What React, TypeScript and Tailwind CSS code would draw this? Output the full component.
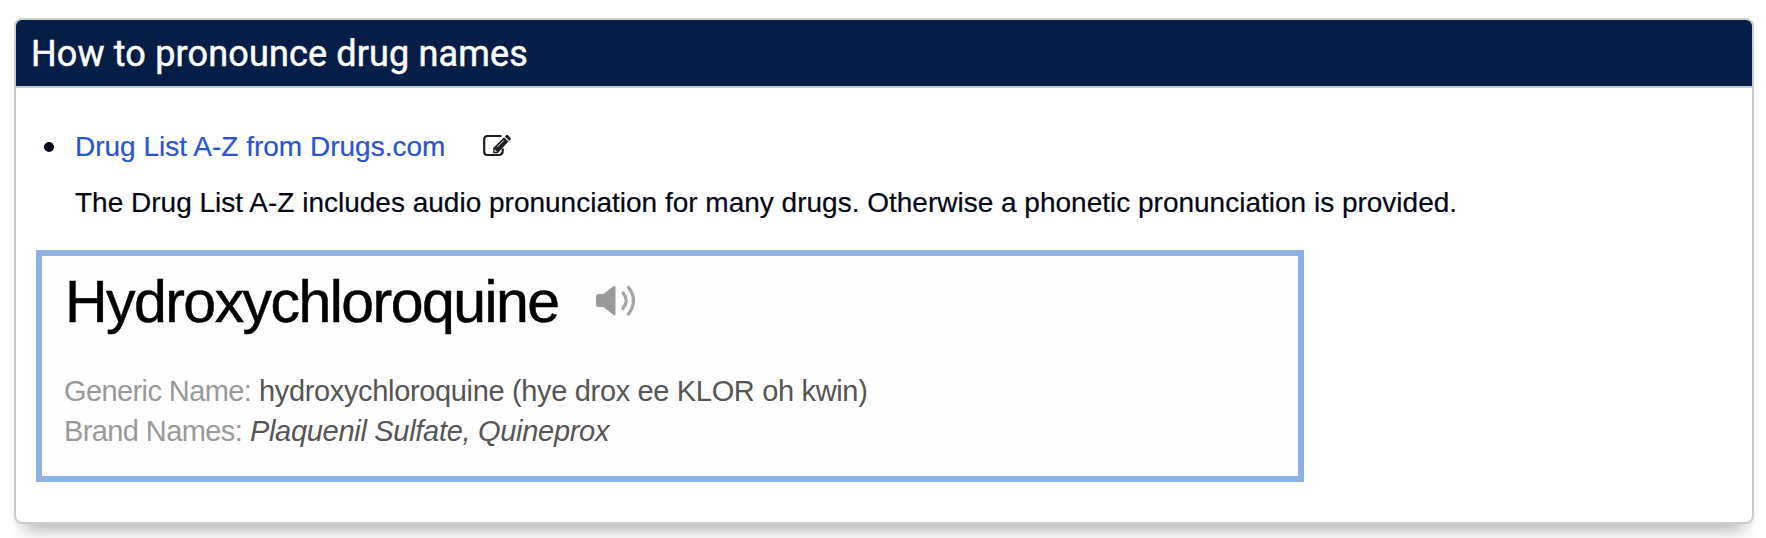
function EditIcon() {
  return (
    <svg width="30" height="26" viewBox="0 0 30 26" className="relative -top-px shrink-0" fill="none">
      <path d="M19.5 3H5.5Q2.2 3 2.2 6.3V18.7Q2.2 22 5.5 22H16.5Q20.8 22 20.8 17.5V15.5" stroke="#1c1f26" strokeWidth="2.2" />
      <path d="M11.2 20.2V15L22 4.2L26.4 8.6L15.6 20.2Z" fill="#1c1f26" />
      <path d="M22.9 3.4L24.2 2.1Q25 1.4 25.8 2.1L28.6 4.9Q29.2 5.7 28.5 6.4L27.2 7.7Z" fill="#1c1f26" />
      <path d="M15.2 14L21.8 7.4" stroke="white" strokeWidth="0.9" />
      <path d="M12.5 16.2V18.8H15Z" fill="white" />
    </svg>
  );
}

function SpeakerIcon() {
  return (
    <svg width="42" height="32" viewBox="0 0 42 32" className="mb-[3px] shrink-0" fill="none">
      <path d="M1 11.5Q1 9 3.5 9H8.5L18 1.5Q20.5 0 20.5 2.5V29Q20.5 31.5 18 29.5L8.5 22H3.5Q1 22 1 19.5Z" fill="#999" />
      <path d="M28 8Q34.5 15.5 28 23.5" stroke="#a3a3a3" strokeWidth="3.2" strokeLinecap="round" />
      <path d="M33.5 2.5Q43.5 15.5 33.5 29" stroke="#a3a3a3" strokeWidth="3.2" strokeLinecap="round" />
    </svg>
  );
}

export default function App() {
  return (
    <div className="h-[538px] overflow-hidden bg-white pt-[18px] pr-3 pl-3.5 font-['Liberation_Sans',Arial,sans-serif] text-[#020617]">
      <section className="h-[506px] overflow-hidden rounded-lg border-2 border-[#ccc] bg-white shadow-[0_16px_16px_-10px_rgba(0,0,0,0.3)]">
        <h2 className="flex h-[68px] items-center border-b-2 border-[#ccc] bg-[#041e47] pt-0.5 pl-[15px] font-[Roboto,sans-serif] text-[36px] leading-none font-normal tracking-[0.15px] whitespace-nowrap text-white [-webkit-text-stroke:0.5px_white]">
          How to pronounce drug names
        </h2>
        <ul className="pt-[39px] text-[28px] leading-[40px] [-webkit-text-stroke:0.2px_currentColor]">
          <li>
            <div className="flex items-center whitespace-nowrap">
              <span className="mr-[21px] ml-7 size-2.5 rounded-full bg-[#020617]" />
              <a className="mr-[37px] text-[#2954d1]">Drug List A-Z from Drugs.com</a>
              <EditIcon />
            </div>
            <p className="mt-4 pl-[59px] whitespace-nowrap">
              The Drug List A-Z includes audio pronunciation for many drugs. Otherwise a phonetic pronunciation is provided.
            </p>
          </li>
        </ul>
        <div className="mt-[27px] ml-5 h-[232px] w-[1268px] border-[6px] border-[#8db1e1] bg-[#fefefe] pl-[22px]">
          <div className="flex h-[92px] items-center pl-px">
            <span className="mr-9 text-[59px] tracking-[-1.55px] text-black [-webkit-text-stroke:0.5px_black]">Hydroxychloroquine</span>
            <SpeakerIcon />
          </div>
          <p className="mt-[23px] text-[29px] leading-[40px] tracking-[-0.34px] text-[#555]"><span className="tracking-[-0.6px] text-[#999]">Generic Name:</span> hydroxychloroquine (hye drox ee KLOR oh kwin)</p>
          <p className="text-[29px] leading-[40px] tracking-[-0.3px] text-[#555]"><span className="tracking-[-0.6px] text-[#999]">Brand Names:</span> <i>Plaquenil Sulfate, Quineprox</i></p>
        </div>
      </section>
    </div>
  );
}
